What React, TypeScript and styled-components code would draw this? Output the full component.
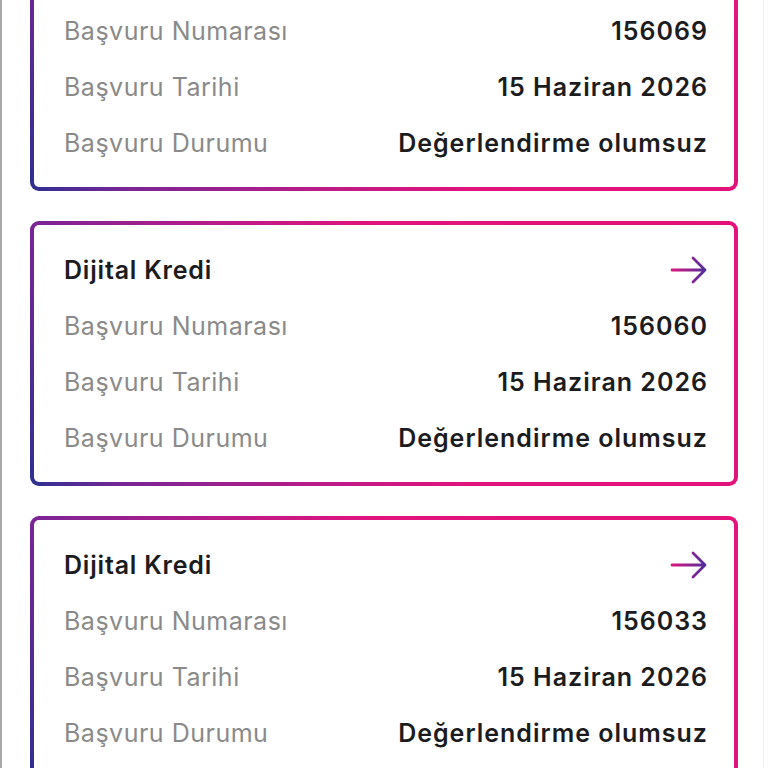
import React, { useLayoutEffect, useRef } from "react";
import styled, { createGlobalStyle } from "styled-components";

type Application = {
  id: string;
  title: string;
  date: string;
  status: string;
};

const applications: Application[] = [
  { id: "156069", title: "Dijital Kredi", date: "15 Haziran 2026", status: "Değerlendirme olumsuz" },
  { id: "156060", title: "Dijital Kredi", date: "15 Haziran 2026", status: "Değerlendirme olumsuz" },
  { id: "156033", title: "Dijital Kredi", date: "15 Haziran 2026", status: "Değerlendirme olumsuz" },
  { id: "156021", title: "Dijital Kredi", date: "14 Haziran 2026", status: "Değerlendirme olumsuz" },
];

const GlobalStyle = createGlobalStyle`
  html, body {
    margin: 0;
    padding: 0;
    background: #ffffff;
  }
  * {
    box-sizing: border-box;
  }
`;

const ArrowIcon = () => (
  <svg width="38" height="30" viewBox="0 0 38 30" fill="none">
    <defs>
      <linearGradient id="arrowGrad" x1="0" y1="0" x2="38" y2="0" gradientUnits="userSpaceOnUse">
        <stop offset="0%" stopColor="#e3157d" />
        <stop offset="100%" stopColor="#45309f" />
      </linearGradient>
    </defs>
    <path
      d="M2 15H35M23 3L35 15L23 27"
      stroke="url(#arrowGrad)"
      strokeWidth="2.8"
      strokeLinecap="round"
      strokeLinejoin="round"
    />
  </svg>
);

export default function App() {
  const listRef = useRef<HTMLDivElement>(null);

  // the list is shown scrolled a little, the first card is cut at the top
  useLayoutEffect(() => {
    if (listRef.current) listRef.current.scrollTop = 74;
  }, []);

  return (
    <>
      <GlobalStyle />
      <Screen ref={listRef}>
        <List>
          {applications.map((app) => (
            <Card key={app.id}>
              <Header>
                <Title>{app.title}</Title>
                <ArrowIcon />
              </Header>
              <Row>
                <Label>Başvuru Numarası</Label>
                <Value>{app.id}</Value>
              </Row>
              <Row>
                <Label>Başvuru Tarihi</Label>
                <Value>{app.date}</Value>
              </Row>
              <Row>
                <Label>Başvuru Durumu</Label>
                <Value>{app.status}</Value>
              </Row>
            </Card>
          ))}
        </List>
      </Screen>
    </>
  );
}

const Screen = styled.div`
  width: 764px;
  height: 768px;
  overflow: hidden;
  border-left: 2px solid #a8a8a8;
  border-right: 1px solid #f0f0f0;
  background: #ffffff;
  font-family: "Inter", "Liberation Sans", sans-serif;
`;

const List = styled.div`
  display: flex;
  flex-direction: column;
  gap: 30px;
  padding: 0 25px 40px 28px;
`;

const Card = styled.div`
  display: flex;
  flex-direction: column;
  padding: 17px 26px 16px 30px;
  border: 4px solid transparent;
  border-radius: 9px;
  background:
    linear-gradient(#ffffff, #ffffff) padding-box,
    linear-gradient(
        70deg,
        #2d3092 0%,
        #7a2596 12%,
        #b81c88 35%,
        #e2137c 55%,
        #e4127a 100%
      )
      border-box;
`;

const Header = styled.div`
  display: flex;
  align-items: center;
  justify-content: space-between;
  height: 56px;
`;

const Title = styled.div`
  font-size: 25px;
  font-weight: 600;
  letter-spacing: 0.8px;
  color: #1c1c1e;
`;

const Row = styled.div`
  display: flex;
  align-items: center;
  justify-content: space-between;
  height: 56px;
`;

const Label = styled.div`
  font-size: 25px;
  font-weight: 400;
  letter-spacing: 0.5px;
  color: #8a8a8a;
`;

const Value = styled.div`
  font-size: 25px;
  font-weight: 600;
  letter-spacing: 1px;
  color: #1c1c1e;
`;
